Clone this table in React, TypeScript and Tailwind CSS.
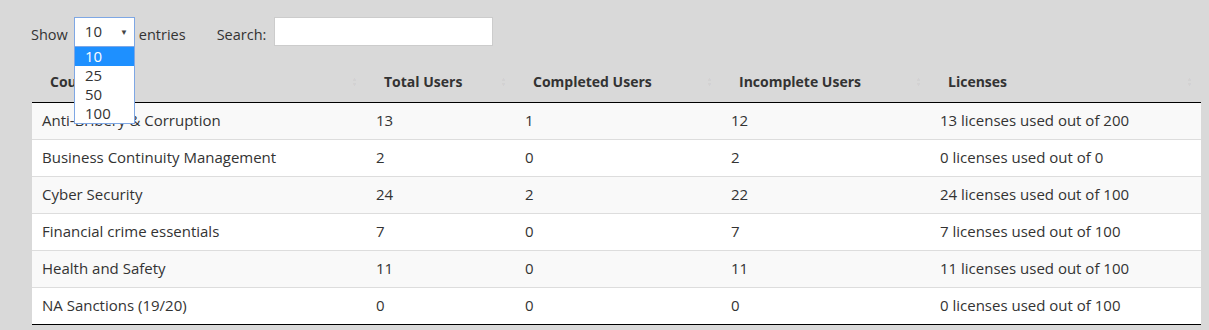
import React from "react";

const rows = [
  ["Anti-Bribery & Corruption", "13", "1", "12", "13 licenses used out of 200"],
  ["Business Continuity Management", "2", "0", "2", "0 licenses used out of 0"],
  ["Cyber Security", "24", "2", "22", "24 licenses used out of 100"],
  ["Financial crime essentials", "7", "0", "7", "7 licenses used out of 100"],
  ["Health and Safety", "11", "0", "11", "11 licenses used out of 100"],
  ["NA Sanctions (19/20)", "0", "0", "0", "0 licenses used out of 100"],
];

const heads = [
  { label: "Course", w: "w-[334px]" },
  { label: "Total Users", w: "w-[149px]" },
  { label: "Completed Users", w: "w-[206px]" },
  { label: "Incomplete Users", w: "w-[209px]" },
  { label: "Licenses", w: "w-[271px]" },
];

function SortIcon() {
  return (
    <span className="absolute right-[8px] top-1/2 -translate-y-1/2 flex flex-col text-[7px] leading-[6px] text-black/[0.04]">
      <span>▲</span>
      <span>▼</span>
    </span>
  );
}

export default function App() {
  return (
    <div
      className="min-h-[330px] w-[1209px] bg-[#d9d9d9] text-[#333] text-[15px]"
      style={{ fontFamily: '"Open Sans", "Liberation Sans", sans-serif' }}
    >
      <div className="relative pl-[31px] pt-[17px]">
        <div className="flex items-center h-[29px]">
          <span className="mt-[6px] text-[14.5px]">Show</span>
          <div className="ml-[6px] w-[61px] h-[30px] bg-white border border-[#7ea7e4] flex items-center justify-between pl-[10px] pr-[6px]">
            <span>10</span>
            <span className="text-[8px] text-[#444]">▼</span>
          </div>
          <span className="ml-[4px] mt-[6px] text-[14.5px]">entries</span>
          <span className="ml-[31px] mt-[6px] text-[14.5px]">Search:</span>
          <div className="ml-[8px] w-[219px] h-[29px] bg-white border border-[#ccc]" />
        </div>

        <div className="absolute left-[74px] top-[46px] w-[61px] bg-white border border-[#7ea7e4] z-10 text-[15px] leading-[19px]">
          <div className="bg-[#1e90ff] text-white pl-[10px]">10</div>
          <div className="pl-[10px]">25</div>
          <div className="pl-[10px]">50</div>
          <div className="pl-[10px]">100</div>
        </div>

        <table className="mt-[16px] ml-[1px] w-[1169px] border-collapse table-fixed">
          <thead>
            <tr className="border-b border-black">
              {heads.map((h) => (
                <th
                  key={h.label}
                  className={`${h.w} relative h-[40px] pl-[18px] text-left font-bold text-[14px] text-[#333]`}
                >
                  {h.label}
                  <SortIcon />
                </th>
              ))}
            </tr>
          </thead>
          <tbody>
            {rows.map((r, i) => (
              <tr
                key={r[0]}
                className={`${i % 2 === 0 ? "bg-[#f9f9f9]" : "bg-white"} ${
                  i === 0 ? "" : "border-t border-t-[#ddd]"
                } ${i === rows.length - 1 ? "border-b border-b-black" : ""}`}
              >
                {r.map((c, j) => (
                  <td key={j} className="h-[37px] pl-[10px] text-left">
                    {c}
                  </td>
                ))}
              </tr>
            ))}
          </tbody>
        </table>
      </div>
    </div>
  );
}
